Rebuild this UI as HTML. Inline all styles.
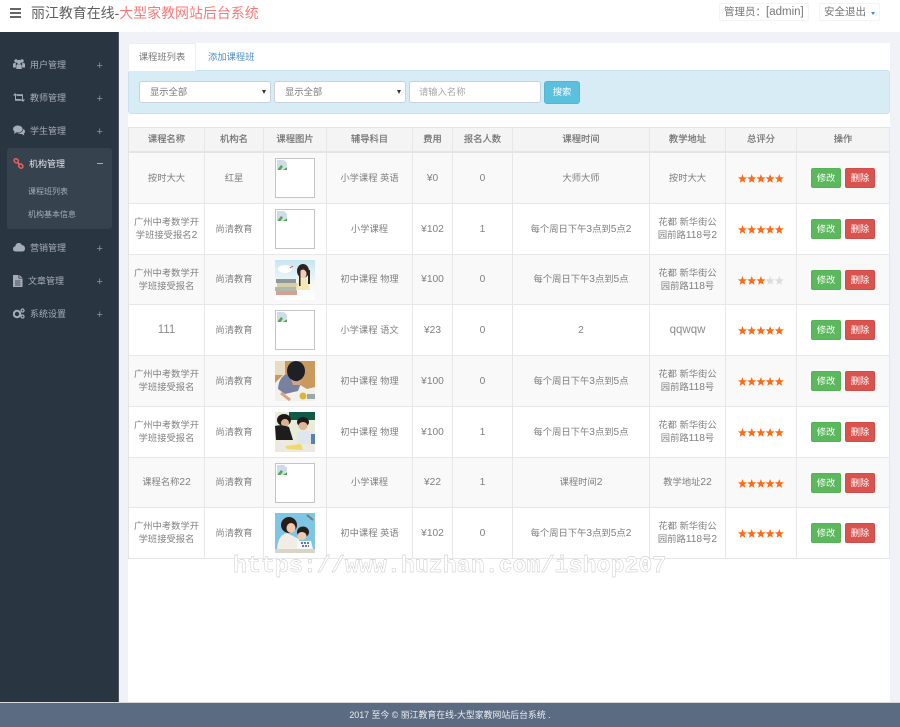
<!DOCTYPE html>
<html lang="zh-CN"><head><meta charset="utf-8"><title>丽江教育在线</title>
<style>
*{box-sizing:border-box}
html,body{margin:0;padding:0;width:900px;height:727px;overflow:hidden;background:#f0f2f7}
body{font-family:"Liberation Sans","Noto Sans CJK SC",sans-serif;color:#777;position:relative}
.a{position:absolute;white-space:nowrap}
#root{position:absolute;left:0;top:0;width:900px;height:727px;filter:blur(.38px)}
.side{position:absolute;left:0;top:32px;width:119px;height:671px;background:#2a3542;border-right:1px solid #4b5664}
.mi{position:absolute;font-size:9px;line-height:12px;color:#a5adb8}
.pl{position:absolute;left:96.500px;font-size:11px;line-height:12px;color:#8b95a2;margin-top:1px}
.ic{position:absolute;left:13px;fill:#a5adb8}
table{position:absolute;left:128px;top:127px;width:762px;border-collapse:separate;border-spacing:0;table-layout:fixed;border-left:1px solid #e4e4e4;border-top:1px solid #e4e4e4;font-size:9.3px;line-height:13px;color:#808080;text-align:center}
th,td{border-right:1px solid #e7e7e7;border-bottom:1px solid #e7e7e7;padding:0 3px;font-weight:normal;vertical-align:middle}
th{height:25px;background:#f4f4f4;border-bottom:2px solid #e4e4e4;color:#747474;-webkit-text-stroke:.2px #747474}
tr.o td{background:#f9f9f9}
.d{font-size:10.200px}
.q{font-size:11.500px;color:#8c8c8c}
.bx{display:block;width:40px;height:40px;margin:0 auto;border:1px solid #c4c4c4;background:#fff;position:relative}
.bx svg{position:absolute;left:1px;top:1px}
.ph{display:block;margin:0 auto}
.b{display:inline-block;width:30px;height:20px;line-height:19px;color:#fff;font-size:9.3px;border-radius:2px;vertical-align:middle}
.g{background:#5cb85c;border:1px solid #58b158;margin-right:4px}
.r{background:#d9534f;border:1px solid #d14c48}
.st{display:block;margin:1px auto 0}
.sel{position:absolute;top:81px;height:22px;background:#fff;border:1px solid #c9d2d8;border-radius:3px;font-size:9.3px;line-height:20px;color:#787878;padding-left:10px}
.sel i{position:absolute;right:4px;top:8px;width:0;height:0;border-left:2.500px solid transparent;border-right:2.500px solid transparent;border-top:4px solid #333}
</style></head><body>
<div id="root">
<svg width="0" height="0" style="position:absolute"><defs>
<g id="bk"><path d="M0 0h7l3 3v3L6 10H0z" fill="#cfdbe8"/><path d="M1 9l3-4 2 1.500L3.500 10H1zM6 10l4-3v3z" fill="#4fa94f"/></g>
<polygon id="s" points="4.500,0 5.700,3.200 9,3.400 6.400,5.500 7.300,8.800 4.500,7 1.700,8.800 2.600,5.500 0,3.400 3.300,3.200"/>
<g id="s5" fill="#ff6a13"><use href="#s"/><use href="#s" x="9.200"/><use href="#s" x="18.400"/><use href="#s" x="27.600"/><use href="#s" x="36.800"/></g>
</defs></svg>

<!-- top -->
<div class="a" style="left:0;top:0;width:900px;height:32px;background:#fff"></div>
<div class="a" style="left:10px;top:8px;width:11px;height:2px;background:#666"></div>
<div class="a" style="left:10px;top:12px;width:11px;height:2px;background:#666"></div>
<div class="a" style="left:10px;top:16px;width:11px;height:2px;background:#666"></div>
<div class="a" style="left:31px;top:4px;font-size:13.950px;line-height:18px;color:#5e5e5e">丽江教育在线-<span style="color:#fb7a7a">大型家教网站后台系统</span></div>
<div class="a" style="left:719px;top:3px;width:90px;height:18px;border:1px solid #f4f4f4;border-radius:2px;font-size:10.500px;line-height:17px;color:#777;padding-left:4px">管理员：<span style="font-size:11.500px">[admin]</span></div>
<div class="a" style="left:819px;top:3px;width:61px;height:18px;border:1px solid #f4f4f4;border-radius:2px;font-size:10.500px;line-height:17px;color:#777;padding-left:4px">安全退出</div>
<div class="a" style="left:871px;top:12px;width:0;height:0;border-left:2.500px solid transparent;border-right:2.500px solid transparent;border-top:3px solid #428bca"></div>

<!-- sidebar -->
<div class="side"></div>
<div class="a" style="left:7px;top:148px;width:105px;height:81px;background:#37424f;border-radius:3px"></div>

<svg class="ic" style="top:58px" width="12" height="12" viewBox="0 0 12 12"><circle cx="3" cy="3" r="1.700"/><circle cx="9" cy="3" r="1.700"/><circle cx="6" cy="4" r="2.100"/><path d="M0 9V6.500Q0 5 1.500 5h1.200L3 9.500H0zM12 9V6.500Q12 5 10.500 5H9.300L9 9.500h3zM3.300 11V8Q3.300 6.200 5 6.200h2Q8.700 6.200 8.700 8v3z"/></svg>
<div class="mi" style="left:30px;top:58.500px">用户管理</div><div class="pl" style="top:58.500px">+</div>

<svg class="ic" style="top:92px" width="12" height="11" viewBox="0 0 12 11"><path d="M0 3.500L2 1l2 2.500H3V7h4.500l1.500 1.800H2V3.500zM12 7.500L10 10 8 7.500h1V4H4.500L3 2.200h7V7.500z"/></svg>
<div class="mi" style="left:30px;top:91.500px">教师管理</div><div class="pl" style="top:91.500px">+</div>

<svg class="ic" style="top:125px" width="12" height="11" viewBox="0 0 12 11"><ellipse cx="4.800" cy="4" rx="4.800" ry="3.500"/><path d="M1.500 6.500L1 9l3-2zM10.500 3.800Q12 5 12 6.500T10.800 8.500L11.300 10.500 8.800 9Q6 9 5 8 9.800 8 10.500 3.800z"/></svg>
<div class="mi" style="left:30px;top:124.500px">学生管理</div><div class="pl" style="top:124.500px">+</div>

<svg class="ic" style="top:158px" width="11" height="11" viewBox="0 0 11 11" fill="none"><g fill="none" stroke="#e8605c" stroke-width="1.500"><rect x="1" y="1" width="4.500" height="3.600" rx="1.700" transform="rotate(45 3.200 2.800)"/><rect x="5.500" y="6.300" width="4.500" height="3.600" rx="1.700" transform="rotate(45 7.800 8.100)"/><path d="M4 4l3 3"/></g></svg>
<div class="mi" style="left:29px;top:157.500px;color:#e4e8ec">机构管理</div><div class="a" style="left:97px;top:163px;width:6px;height:1px;background:#a5adb8"></div>
<div class="a" style="left:28px;top:186px;font-size:8px;line-height:12px;color:#a5adb8">课程班列表</div>
<div class="a" style="left:28px;top:209px;font-size:8px;line-height:12px;color:#a5adb8">机构基本信息</div>

<svg class="ic" style="top:242px" width="12" height="10" viewBox="0 0 12 10"><path d="M2.800 9.500Q0 9.500 0 7t2.300-2.600Q2.500 1.500 5.300 1 7.800.6 8.800 3 12 3.500 12 6.500T9 9.500z"/></svg>
<div class="mi" style="left:30px;top:241.500px">营销管理</div><div class="pl" style="top:241.500px">+</div>

<svg class="ic" style="top:275px" width="10" height="12" viewBox="0 0 10 12"><path d="M0 0h5.500v3.500H9.500V12H0zM6.300 0l3.200 2.800H6.300z"/><path d="M2 6h5.500M2 8h5.500M2 10h5.500" stroke="#2a3542" stroke-width=".7"/></svg>
<div class="mi" style="left:28px;top:274.500px">文章管理</div><div class="pl" style="top:274.500px">+</div>

<svg class="ic" style="top:308px" width="12" height="11" viewBox="0 0 12 11"><circle cx="4" cy="6" r="3.200" fill="none" stroke="#a5adb8" stroke-width="2"/><circle cx="9.500" cy="2.500" r="1.500" fill="none" stroke="#a5adb8" stroke-width="1.300"/><circle cx="9.500" cy="8.500" r="1.500" fill="none" stroke="#a5adb8" stroke-width="1.300"/></svg>
<div class="mi" style="left:30px;top:307.500px">系统设置</div><div class="pl" style="top:307.500px">+</div>

<!-- panel -->
<div class="a" style="left:128px;top:43px;width:762px;height:660px;background:#fff"></div>
<div class="a" style="left:128px;top:43px;width:68px;height:28px;background:#fff;border:1px solid #eeeeee;border-bottom:0;border-radius:2px 2px 0 0;font-size:9.3px;line-height:27px;text-align:center;color:#787878;z-index:2">课程班列表</div>
<div class="a" style="left:208px;top:51px;font-size:9.3px;line-height:13px;color:#4b8fcc">添加课程班</div>
<div class="a" style="left:128px;top:70px;width:762px;height:44px;background:#d8ecf6;border:1px solid #c8e2ee;border-radius:3px"></div>
<div class="sel" style="left:139px;width:132px">显示全部<i></i></div>
<div class="sel" style="left:274px;width:132px">显示全部<i></i></div>
<div class="sel" style="left:409px;width:132px;padding-left:9px;color:#a6a6a6">请输入名称</div>
<div class="a" style="left:544px;top:81px;width:36px;height:23px;background:#5bc0de;border:1px solid #52b6d4;border-radius:3px;color:#fff;font-size:9.3px;line-height:21px;text-align:center">搜索</div>

<table>
<colgroup><col style="width:76px"><col style="width:59px"><col style="width:63px"><col style="width:86px"><col style="width:40px"><col style="width:60px"><col style="width:137px"><col style="width:76px"><col style="width:71px"><col style="width:93px"></colgroup>
<tr><th>课程名称</th><th>机构名</th><th>课程图片</th><th>辅导科目</th><th>费用</th><th>报名人数</th><th>课程时间</th><th>教学地址</th><th>总评分</th><th>操作</th></tr>

<tr class="o" style="height:51px"><td>按时大大</td><td>红星</td><td><span class="bx"><svg width="11" height="11"><use href="#bk"/></svg></span></td><td>小学课程 英语</td><td class="d">¥0</td><td class="d">0</td><td>大师大师</td><td>按时大大</td><td><svg class="st" width="46" height="9"><use href="#s5"/></svg></td><td><span class="b g">修改</span><span class="b r">删除</span></td></tr>

<tr style="height:51px"><td>广州中考数学开<br>学班接受报名<span class="d">2</span></td><td>尚清教育</td><td><span class="bx"><svg width="11" height="11"><use href="#bk"/></svg></span></td><td>小学课程</td><td class="d">¥102</td><td class="d">1</td><td>每个周日下午<span class="d">3</span>点到<span class="d">5</span>点<span class="d">2</span></td><td>花都 新华街公<br>园前路<span class="d">118</span>号<span class="d">2</span></td><td><svg class="st" width="46" height="9"><use href="#s5"/></svg></td><td><span class="b g">修改</span><span class="b r">删除</span></td></tr>

<tr class="o" style="height:50px"><td>广州中考数学开<br>学班接受报名</td><td>尚清教育</td><td><svg class="ph" width="40" height="40" viewBox="0 0 40 40"><defs><linearGradient id="g1" x1="0" y1="0" x2="0" y2="1"><stop offset="0" stop-color="#c5e6f2"/><stop offset=".6" stop-color="#f4f8f6"/><stop offset="1" stop-color="#fff"/></linearGradient></defs><rect width="40" height="40" fill="url(#g1)"/><ellipse cx="10" cy="9" rx="7" ry="4" fill="#fff"/><path d="M15 8l3-2" stroke="#e05050"/><rect x="1" y="19" width="20" height="4" fill="#8d9a9c"/><rect x="2" y="23" width="20" height="4" fill="#d8cfa8"/><rect x="0" y="27" width="22" height="4" fill="#b0b8a8"/><rect x="1" y="31" width="21" height="4" fill="#d8a090"/><ellipse cx="28" cy="11" rx="6" ry="7" fill="#2c2320"/><ellipse cx="28" cy="14" rx="3.500" ry="4.500" fill="#f1cdb4"/><path d="M21 30q1-12 7-12t7 12z" fill="#f5e8b8"/><rect x="24" y="8" width="1.500" height="18" fill="#2c2320"/><rect x="33" y="10" width="2" height="14" fill="#2c2320"/></svg></td><td>初中课程 物理</td><td class="d">¥100</td><td class="d">0</td><td>每个周日下午<span class="d">3</span>点到<span class="d">5</span>点</td><td>花都 新华街公<br>园前路<span class="d">118</span>号</td><td><svg class="st" width="46" height="9"><g fill="#ff6a13"><use href="#s"/><use href="#s" x="9.200"/><use href="#s" x="18.400"/></g><g fill="#dcdcdc"><use href="#s" x="27.600"/><use href="#s" x="36.800"/></g></svg></td><td><span class="b g">修改</span><span class="b r">删除</span></td></tr>

<tr style="height:51px"><td class="q">111</td><td>尚清教育</td><td><span class="bx"><svg width="11" height="11"><use href="#bk"/></svg></span></td><td>小学课程 语文</td><td class="d">¥23</td><td class="d">0</td><td class="d">2</td><td class="q">qqwqw</td><td><svg class="st" width="46" height="9"><use href="#s5"/></svg></td><td><span class="b g">修改</span><span class="b r">删除</span></td></tr>

<tr class="o" style="height:51px"><td>广州中考数学开<br>学班接受报名</td><td>尚清教育</td><td><svg class="ph" width="40" height="40" viewBox="0 0 40 40"><rect width="40" height="40" fill="#c99a5c"/><rect width="10" height="14" fill="#e8dcc4"/><path d="M0 40V22L8 14 32 28 40 26V40z" fill="#f2f0ea"/><path d="M3 28Q4 14 14 13L26 22 23 30 10 33z" fill="#7a80a0"/><ellipse cx="21" cy="10" rx="9" ry="10" fill="#1f2026"/><path d="M16 18q6 5 11 0l-2 6h-7z" fill="#d4a585"/><path d="M6 32l9 7" stroke="#d4a585" stroke-width="3"/><circle cx="28" cy="35" r="3.500" fill="#dcb53a"/><rect x="32" y="33" width="8" height="5" fill="#9aa8a8"/></svg></td><td>初中课程 物理</td><td class="d">¥100</td><td class="d">0</td><td>每个周日下午<span class="d">3</span>点到<span class="d">5</span>点</td><td>花都 新华街公<br>园前路<span class="d">118</span>号</td><td><svg class="st" width="46" height="9"><use href="#s5"/></svg></td><td><span class="b g">修改</span><span class="b r">删除</span></td></tr>

<tr style="height:51px"><td>广州中考数学开<br>学班接受报名</td><td>尚清教育</td><td><svg class="ph" width="40" height="40" viewBox="0 0 40 40"><rect width="40" height="40" fill="#e8ecd8"/><rect x="14" width="26" height="8" fill="#0f5a48"/><rect y="28" width="40" height="12" fill="#eceae0"/><ellipse cx="9" cy="8" rx="7" ry="6" fill="#201816"/><ellipse cx="10" cy="11" rx="4" ry="4" fill="#dcb090"/><path d="M0 14Q6 12 14 15L18 28H1z" fill="#1e1c1c"/><ellipse cx="28" cy="10" rx="6" ry="5" fill="#201c1c"/><ellipse cx="28" cy="14" rx="4.500" ry="4" fill="#e0b698"/><path d="M22 20Q28 17 37 20L40 32H22z" fill="#dfe6ee"/><path d="M10 34l16-2 2 6-16-1z" fill="#f1d86a"/><rect x="36" y="22" width="4" height="10" fill="#5a80b0"/></svg></td><td>初中课程 物理</td><td class="d">¥100</td><td class="d">1</td><td>每个周日下午<span class="d">3</span>点到<span class="d">5</span>点</td><td>花都 新华街公<br>园前路<span class="d">118</span>号</td><td><svg class="st" width="46" height="9"><use href="#s5"/></svg></td><td><span class="b g">修改</span><span class="b r">删除</span></td></tr>

<tr class="o" style="height:50px"><td>课程名称<span class="d">22</span></td><td>尚清教育</td><td><span class="bx"><svg width="11" height="11"><use href="#bk"/></svg></span></td><td>小学课程</td><td class="d">¥22</td><td class="d">1</td><td>课程时间<span class="d">2</span></td><td>教学地址<span class="d">22</span></td><td><svg class="st" width="46" height="9"><use href="#s5"/></svg></td><td><span class="b g">修改</span><span class="b r">删除</span></td></tr>

<tr style="height:51px"><td>广州中考数学开<br>学班接受报名</td><td>尚清教育</td><td><svg class="ph" width="40" height="40" viewBox="0 0 40 40"><rect width="40" height="40" fill="#7fc6e4"/><path d="M32 2l6 5" stroke="#7a7a70" stroke-width="2"/><ellipse cx="14" cy="12" rx="8" ry="8" fill="#2a1c18"/><ellipse cx="16" cy="15" rx="4.500" ry="5" fill="#f0c8ac"/><path d="M2 36Q3 22 12 20L24 26 26 36z" fill="#f2ece6"/><ellipse cx="28" cy="19" rx="6" ry="5.500" fill="#20201e"/><ellipse cx="27" cy="23" rx="4.500" ry="4" fill="#f0c8ac"/><path d="M22 28h14l2 8H22z" fill="#f8f8fa"/><path d="M26 30h8M27 33h7" stroke="#33508c" stroke-width="1.500" stroke-dasharray="2 1"/><rect y="36" width="40" height="4" fill="#d8d4c8"/></svg></td><td>初中课程 英语</td><td class="d">¥102</td><td class="d">0</td><td>每个周日下午<span class="d">3</span>点到<span class="d">5</span>点<span class="d">2</span></td><td>花都 新华街公<br>园前路<span class="d">118</span>号<span class="d">2</span></td><td><svg class="st" width="46" height="9"><use href="#s5"/></svg></td><td><span class="b g">修改</span><span class="b r">删除</span></td></tr>
</table>

<!-- watermark -->
<div class="a" style="left:233px;top:551px;font-family:'Liberation Mono',monospace;font-weight:bold;font-size:23.300px;line-height:30px;color:#fff;-webkit-text-stroke:.4px #c2c2c2;z-index:5">https://www.huzhan.com/ishop207</div>

<!-- footer -->
<div class="a" style="left:0;top:702px;width:900px;height:25px;background:#5b6b81;border-top:1px solid #d5d8dd;font-size:8.900px;line-height:24px;color:#eceff3;text-align:center;z-index:3">2017 至今 © 丽江教育在线-大型家教网站后台系统 .</div>
</div>
</body></html>
